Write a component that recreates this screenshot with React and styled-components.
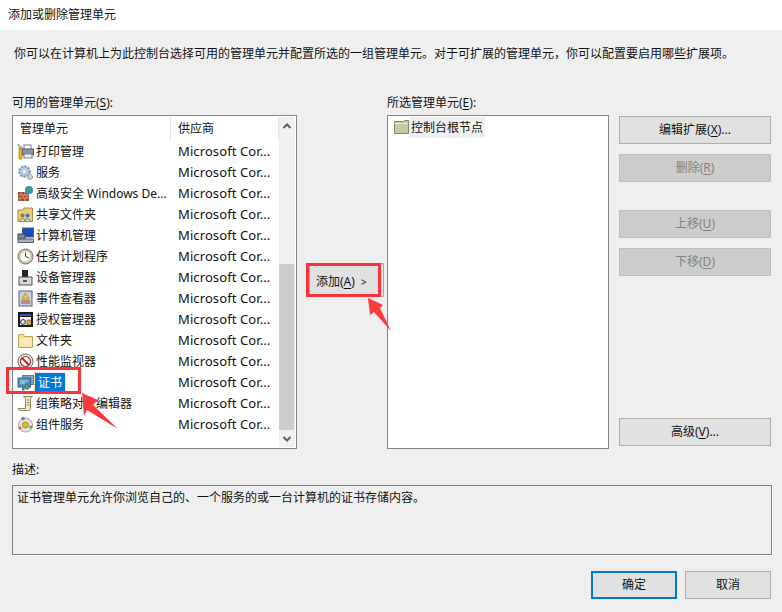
import styled, { createGlobalStyle } from "styled-components";

const GlobalStyle = createGlobalStyle`
  html, body { margin: 0; padding: 0; background: #efefef; }
  * { box-sizing: border-box; }
`;

const Dialog = styled.div`
  position: relative;
  width: 782px;
  height: 612px;
  overflow: hidden;
  background: #efefef;
  color: #111;
  font-family: "Noto Sans", "Noto Sans CJK SC", sans-serif;
  font-size: 12px;
`;

const TitleBar = styled.div`
  height: 30px;
  padding: 7px 0 0 8px;
  background: #fff;
  line-height: 16px;
`;

const Intro = styled.p`
  margin: 0;
  padding: 16px 0 0 14px;
  height: 59px;
  line-height: 16px;
  white-space: nowrap;
`;

const Main = styled.div`
  display: grid;
  grid-template-columns: 285px 90px 222px 152px;
  padding-left: 12px;
`;

const Column = styled.div`
  display: flex;
  flex-direction: column;
`;

const Label = styled.div`
  height: 26px;
  padding-top: 6px;
  line-height: 16px;
  white-space: nowrap;
`;

const ListBox = styled.div`
  display: flex;
  width: ${(props) => props.$width}px;
  height: 334px;
  padding: 1px;
  background: #fff;
  border: 1px solid #82858f;
`;

const ListBody = styled.div`
  flex: 1;
`;

const HeaderRow = styled.div`
  display: grid;
  grid-template-columns: 157px 1fr;
  height: 24px;
  line-height: 24px;
`;

const HeaderCell = styled.div`
  padding-left: ${(props) => props.$pad}px;
  border-right: 1px solid #e5e5e5;
`;

const Row = styled.div`
  display: grid;
  grid-template-columns: 160px 1fr;
  height: 21px;
  line-height: 21px;
  white-space: nowrap;
`;

const NameCell = styled.div`
  display: flex;
  align-items: center;
  gap: 1px;
  padding-left: 3px;
`;

const RowIcon = styled.svg`
  flex: none;
  width: 17px;
  height: 17px;
`;

const Name = styled.span`
  height: 19px;
  padding: 0 ${(props) => (props.$selected ? 3 : 1)}px;
  line-height: 19px;
  background: ${(props) => (props.$selected ? "#0078d7" : "transparent")};
  color: ${(props) => (props.$selected ? "#fff" : "inherit")};
  outline: ${(props) => (props.$selected ? "1px dotted #f5c280" : "none")};
`;

const Vendor = styled.div`
  padding-left: 4px;
  font-size: 13px;
  letter-spacing: 0.1px;
`;

const ScrollBar = styled.div`
  display: flex;
  flex-direction: column;
  align-items: center;
  width: 16px;
  background: #f0f0f0;
`;

const ScrollArrow = styled.svg`
  flex: none;
  width: 16px;
  height: 17px;
`;

const ScrollTrack = styled.div`
  flex: 1;
  width: 100%;
  padding-top: 130px;
`;

const ScrollThumb = styled.div`
  width: 15px;
  height: 166px;
  background: #cdcdcd;
`;

const MiddleColumn = styled.div`
  padding: 174px 0 0 12px;
`;

const Button = styled.button`
  display: block;
  width: ${(props) => props.$width || 152}px;
  height: 28px;
  padding: 0;
  background: ${(props) => (props.disabled ? "#ccc" : "#e1e1e1")};
  border: ${(props) => (props.$primary ? "2px solid #0078d7" : props.disabled ? "1px solid #bfbfbf" : "1px solid #adadad")};
  border-radius: 0;
  color: ${(props) => (props.disabled ? "#838383" : "#111")};
  font: inherit;
  line-height: 16px;
  margin-top: ${(props) => props.$top || 0}px;
`;

const AddButton = styled(Button)`
  width: 75px;
  height: 34px;
  text-align: left;
  padding: 3px 0 0 6px;
`;

const AddChevron = styled.span`
  margin-left: 6px;
  font-size: 10px;
`;

const Key = styled.span`
  text-decoration: underline;
  text-underline-offset: 2px;
`;

const RootNode = styled.div`
  display: flex;
  align-items: center;
  height: 21px;
  padding-left: 5px;
`;

const RootIcon = styled.svg`
  flex: none;
  width: 15px;
  height: 15px;
`;

const RootText = styled.span`
  height: 21px;
  padding: 1px 2px 0;
  background: #f0f0f0;
  line-height: 20px;
`;

const Actions = styled.div`
  display: flex;
  flex-direction: column;
  padding: 27px 0 0 10px;
  width: 162px;
`;

const Describe = styled.div`
  padding: 0 10px 0 12px;
`;

const DescribeLabel = styled.div`
  height: 36px;
  padding-top: 13px;
  line-height: 16px;
`;

const DescribeBox = styled.div`
  width: 760px;
  height: 70px;
  padding: 4px 4px;
  border: 1px solid #7f7f7f;
  box-shadow: 1px 1px 0 #fff;
  line-height: 16px;
`;

const Footer = styled.div`
  display: flex;
  justify-content: flex-end;
  gap: 8px;
  padding: 16px 11px 0 0;
`;

const Annotations = styled.svg`
  position: absolute;
  left: 0;
  top: 0;
  width: 782px;
  height: 612px;
  pointer-events: none;
`;

const icons = {
  print: (
    <>
      <rect x="7" y="2" width="7" height="5" fill="#fff" stroke="#77808a" />
      <rect x="5" y="6" width="11.5" height="6" fill="#8b98a8" stroke="#4d5763" />
      <rect x="7" y="11" width="8" height="4" fill="#eef1f4" stroke="#77808a" />
      <path d="M1 1l5 4-1 1-4-3z" fill="#c5ccd3" stroke="#6e7780" strokeWidth=".5" />
      <rect x="2" y="5" width="3" height="11" fill="#e8b92c" stroke="#8a6d10" strokeWidth=".6" />
    </>
  ),
  service: (
    <>
      <circle cx="7.5" cy="7.5" r="5.2" fill="#b9cde2" stroke="#7f9dbc" strokeWidth="2.2" strokeDasharray="2.2 1.2" />
      <circle cx="7.5" cy="7.5" r="2.2" fill="#f0f4f8" stroke="#8ea7c0" strokeWidth=".5" />
      <circle cx="13" cy="13" r="2.6" fill="#c5cdd4" stroke="#8c97a1" strokeDasharray="1.4 .7" />
    </>
  ),
  firewall: (
    <>
      <rect x="1" y="7" width="11" height="9" fill="#a4492e" />
      <path d="M1 10h11M1 13h11M4 7v3M8 7v3M6 10v3M10 10v3M3 13v3M8 13v3" stroke="#e2b09c" strokeWidth=".8" />
      <circle cx="12" cy="5" r="4" fill="#2f8fd8" />
      <path d="M10 3l3-1 1 3-3 2z" fill="#47a83f" />
    </>
  ),
  share: (
    <>
      <path d="M1 4h5l1-2h8.5v13.5H1z" fill="#eecb7d" stroke="#a98a43" />
      <circle cx="5.5" cy="9.5" r="2" fill="#5a8f4a" />
      <circle cx="10.5" cy="9.5" r="2" fill="#3d77b8" />
      <path d="M3 15c0-3 5-3 5 0M8 15c0-3 5-3 5 0" fill="#d8e2cf" stroke="#556" strokeWidth=".7" />
    </>
  ),
  computer: (
    <>
      <rect x="5.5" y="1" width="11" height="9" fill="#1d49c4" stroke="#59606b" />
      <rect x="1" y="7" width="7" height="5" fill="#7b8b9c" stroke="#3f4a55" />
      <rect x="1" y="12" width="15.5" height="3.5" fill="#aab3bd" stroke="#59606b" />
    </>
  ),
  clock: (
    <>
      <circle cx="8.5" cy="8.5" r="7.5" fill="#d6c9a5" stroke="#6e6e6e" />
      <circle cx="8.5" cy="8.5" r="5.5" fill="#fbfbf6" stroke="#9d9d9d" strokeWidth=".6" />
      <path d="M8.5 4.5v4l3.5 1.5" fill="none" stroke="#444" />
    </>
  ),
  device: (
    <>
      <rect x="5" y="1" width="6" height="7" fill="#222" />
      <rect x="2" y="8" width="13" height="8" fill="#d5d8dc" stroke="#555" />
      <rect x="6" y="11" width="4" height="2" fill="#555" />
    </>
  ),
  event: (
    <>
      <rect x="2" y="1" width="13" height="15" fill="#c9cfdc" stroke="#5c6478" />
      <path d="M8.5 3l3.5 6H5z" fill="#f4c52e" stroke="#8b6d10" strokeWidth=".5" />
      <path d="M4 11h9M4 13h9" stroke="#b3423a" />
    </>
  ),
  license: (
    <>
      <rect x="1" y="1" width="15" height="15" fill="#1b1b1b" />
      <rect x="3" y="3" width="11" height="2" fill="#3357c7" />
      <rect x="3" y="6" width="11" height="8" fill="#f4f4f4" />
      <circle cx="6" cy="11" r="2.4" fill="none" stroke="#222" />
      <rect x="10" y="9" width="4" height="5" fill="#e3b52c" stroke="#333" strokeWidth=".5" />
    </>
  ),
  folder: (
    <>
      <path d="M1.5 2.5h5l1 2h8v11h-14z" fill="#f7dd92" stroke="#bfa25a" />
      <path d="M2.5 6h12v8.5h-12z" fill="#fbeab7" />
    </>
  ),
  perf: (
    <>
      <circle cx="8.5" cy="8.5" r="7.5" fill="#e8e8e8" stroke="#666" />
      <circle cx="8.5" cy="8.5" r="5" fill="#fff" stroke="#b52a24" strokeWidth="1.2" />
      <path d="M5 5l7 7" stroke="#b52a24" strokeWidth="2" />
    </>
  ),
  cert: (
    <>
      <rect x="5.5" y="1.5" width="11" height="9" fill="#7faacb" stroke="#4d7ea3" />
      <rect x="1" y="4" width="12.5" height="9" fill="#4f8ebd" stroke="#2f6690" />
      <path d="M3 7h8M3 9h5" stroke="#cde2f2" />
      <circle cx="10" cy="13" r="2.4" fill="#6f8f78" stroke="#40594a" strokeWidth=".6" />
      <path d="M5 13v3.5h2.5V13z" fill="#3a78a8" />
    </>
  ),
  policy: (
    <>
      <path d="M6 1.5h9.5c-1 .5-2 1.5-2 3v9c0 1.5-1 2-2 2H2.5c-1 0-1.5-1-1.5-2h7.5V4c0-1.2-1-2.5-2.5-2.5z" fill="#eee7c9" stroke="#8f8763" />
      <path d="M10 5h2.5M10 7.5h2.5M10 10h2.5" stroke="#8f8763" />
    </>
  ),
  component: (
    <>
      <circle cx="8.5" cy="9" r="7" fill="#e3e3e3" stroke="#a5a5a5" />
      <circle cx="8.5" cy="9" r="3" fill="#e6b820" stroke="#8a6d10" strokeWidth=".6" />
      <circle cx="6" cy="2.5" r="1.8" fill="#8470b8" />
      <circle cx="3" cy="12" r="1.6" fill="#d0625a" />
      <circle cx="14" cy="11" r="1.6" fill="#5fa845" />
    </>
  ),
};

const snapins = [
  ["print", "打印管理"],
  ["service", "服务"],
  ["firewall", "高级安全 Windows De..."],
  ["share", "共享文件夹"],
  ["computer", "计算机管理"],
  ["clock", "任务计划程序"],
  ["device", "设备管理器"],
  ["event", "事件查看器"],
  ["license", "授权管理器"],
  ["folder", "文件夹"],
  ["perf", "性能监视器"],
  ["cert", "证书"],
  ["policy", "组策略对象编辑器"],
  ["component", "组件服务"],
];

export default function App() {
  return (
    <Dialog>
      <GlobalStyle />
      <TitleBar>添加或删除管理单元</TitleBar>
      <Intro>你可以在计算机上为此控制台选择可用的管理单元并配置所选的一组管理单元。对于可扩展的管理单元，你可以配置要启用哪些扩展项。</Intro>
      <Main>
        <Column>
          <Label>可用的管理单元(<Key>S</Key>):</Label>
          <ListBox $width={285}>
            <ListBody>
              <HeaderRow>
                <HeaderCell $pad={6}>管理单元</HeaderCell>
                <HeaderCell $pad={7}>供应商</HeaderCell>
              </HeaderRow>
              {snapins.map(([icon, name]) => (
                <Row key={name}>
                  <NameCell>
                    <RowIcon viewBox="0 0 17 17">{icons[icon]}</RowIcon>
                    <Name $selected={name === "证书"}>{name}</Name>
                  </NameCell>
                  <Vendor>Microsoft Cor...</Vendor>
                </Row>
              ))}
            </ListBody>
            <ScrollBar>
              <ScrollArrow viewBox="0 0 16 17">
                <path d="M4.5 11L8 7.5 11.5 11" fill="none" stroke="#606060" strokeWidth="2" />
              </ScrollArrow>
              <ScrollTrack>
                <ScrollThumb />
              </ScrollTrack>
              <ScrollArrow viewBox="0 0 16 17">
                <path d="M4.5 7L8 10.5 11.5 7" fill="none" stroke="#606060" strokeWidth="2" />
              </ScrollArrow>
            </ScrollBar>
          </ListBox>
        </Column>
        <MiddleColumn>
          <AddButton>添加(<Key>A</Key>)<AddChevron>&gt;</AddChevron></AddButton>
        </MiddleColumn>
        <Column>
          <Label>所选管理单元(<Key>E</Key>):</Label>
          <ListBox $width={222}>
            <RootNode>
              <RootIcon viewBox="0 0 15 15">
                <path d="M.5 1.5h9l1-1h4v13H.5z" fill="#c3cb9f" stroke="#7f8766" />
                <path d="M.5 3.5h14" stroke="#e4e8ce" />
              </RootIcon>
              <RootText>控制台根节点</RootText>
            </RootNode>
          </ListBox>
        </Column>
        <Actions>
          <Button>编辑扩展(<Key>X</Key>)...</Button>
          <Button disabled $top={10}>删除(<Key>R</Key>)</Button>
          <Button disabled $top={28}>上移(<Key>U</Key>)</Button>
          <Button disabled $top={10}>下移(<Key>D</Key>)</Button>
          <Button $top={142}>高级(<Key>V</Key>)...</Button>
        </Actions>
      </Main>
      <Describe>
        <DescribeLabel>描述:</DescribeLabel>
        <DescribeBox>证书管理单元允许你浏览自己的、一个服务的或一台计算机的证书存储内容。</DescribeBox>
      </Describe>
      <Footer>
        <Button $primary $width={86}>确定</Button>
        <Button $width={86}>取消</Button>
      </Footer>
      <Annotations viewBox="0 0 782 612">
        <rect x="7.5" y="368.5" width="72" height="24" fill="none" stroke="#f6343a" strokeWidth="3" />
        <rect x="307.5" y="264.5" width="72" height="31" fill="none" stroke="#f6343a" strokeWidth="3" />
        <polygon points="82,393 98,400 93,405 118,429 87,410 84,416" fill="#fb3a3a" />
        <polygon points="368,298 383,305 380,308 391,331 374,312 370,315" fill="#fb3a3a" />
      </Annotations>
    </Dialog>
  );
}
